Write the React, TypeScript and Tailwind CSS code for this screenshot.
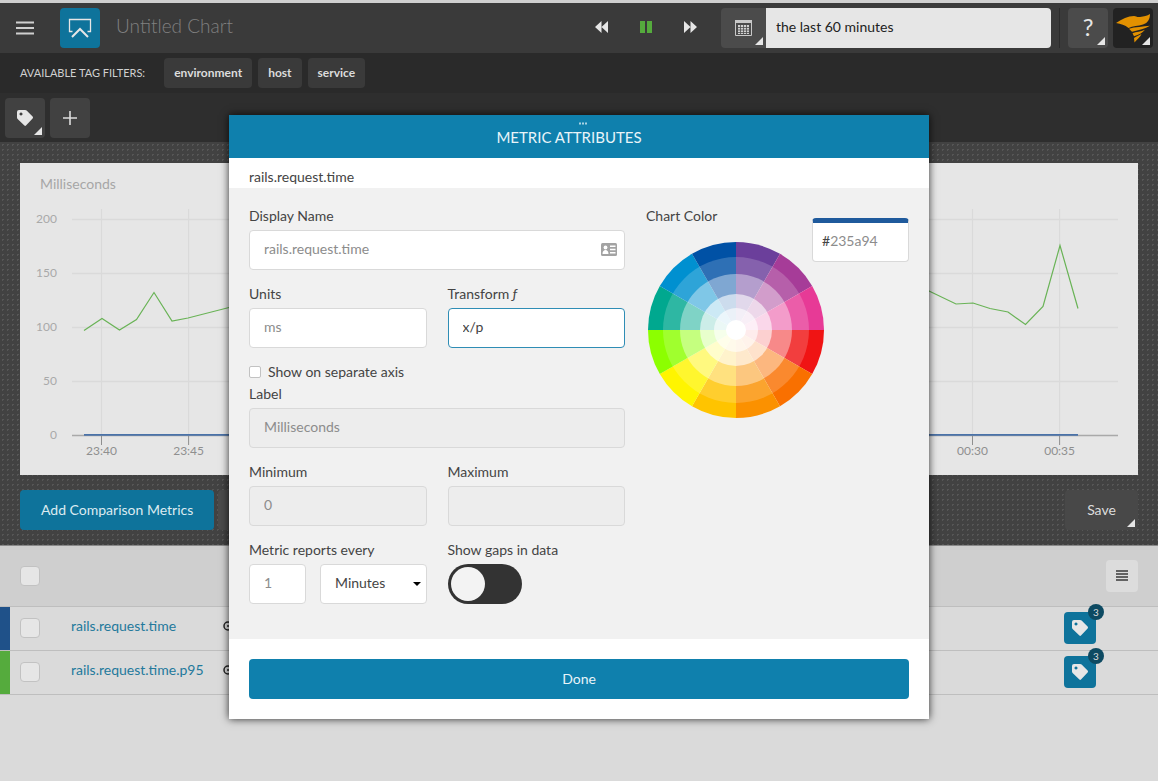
import type { ReactNode } from "react";

const filters = ["environment", "host", "service"];

const metrics = [
  { name: "rails.request.time", stripe: "bg-[#1f5189]", tags: 3 },
  { name: "rails.request.time.p95", stripe: "bg-[#55ab3d]", tags: 3 },
];

const yTicks = [200, 150, 100, 50, 0];
const xTicks = ["23:40", "23:45", "23:50", "23:55", "00:00", "00:05", "00:10", "00:15", "00:20", "00:25", "00:30", "00:35"];

// clockwise from twelve o'clock
const wheelColors = [
  "#6b3f9b", "#a63c98", "#e73a96", "#f01414", "#f97000", "#fb9100",
  "#ffc400", "#fff500", "#8cff00", "#00a88f", "#0090d0", "#0051a5",
];

const wheelTints = [
  { r: 73, opacity: 0.18 },
  { r: 56, opacity: 0.39 },
  { r: 36, opacity: 0.6 },
  { r: 22, opacity: 0.6 },
  { r: 10, opacity: 1 },
];

function Corner() {
  return (
    <svg className="absolute right-[3px] bottom-[3px] size-2" viewBox="0 0 8 8" aria-hidden="true">
      <path d="M8 0v8H0z" fill="#e6e6e6" />
    </svg>
  );
}

function TagIcon() {
  return (
    <svg width="16" height="16" viewBox="0 0 16 16" fill="#e6e6e6" aria-hidden="true">
      <path
        fillRule="evenodd"
        d="M2 0h6.200q.8 0 1.400.6l6 6q.8.9 0 1.800l-6.600 7.100q-.8.8-1.600 0L.6 8.900Q0 8.300 0 7.500V2Q0 0 2 0zM4 2.500a1.500 1.500 0 1 0 .01 0z"
      />
    </svg>
  );
}

function Header() {
  return (
    <header className="flex h-[53px] items-center border-t-3 border-[#cfcfcf] bg-[#3a3a3a] pr-[5px] pb-px pl-4">
      <button aria-label="Menu">
        <svg width="18" height="14" viewBox="0 0 18 14" stroke="#cfcfcf" strokeWidth="1.800">
          <path d="M0 1.500h18M0 7h18M0 12.500h18" />
        </svg>
      </button>
      <a href="#charts" aria-label="Charts" className="ml-[26px] flex size-10 items-center justify-center rounded bg-[#0e739b]">
        <svg width="24" height="20" viewBox="0 0 24 20" fill="none" stroke="#e6e6e6">
          <path d="M4.500 13.500H1.500V1.500H22.500V13.500H19.500" strokeWidth="1.300" />
          <path d="M4 19l8-8 8 8" strokeWidth="2" />
        </svg>
      </a>
      <h1 className="ml-4 pb-1 text-[19px] leading-6 font-light text-[#808080]">Untitled Chart</h1>

      <div className="ml-auto flex items-center gap-8 pb-px">
        <button aria-label="Back">
          <svg width="13" height="12" viewBox="0 0 13 12" fill="#e6e6e6">
            <path d="M6.500 0v12L0 6zM13 0v12L6.500 6z" />
          </svg>
        </button>
        <button aria-label="Pause">
          <svg width="12" height="12" viewBox="0 0 12 12" fill="#55ab3d">
            <path d="M0 0h5v12H0zM7 0h5v12H7z" />
          </svg>
        </button>
        <button aria-label="Forward">
          <svg width="13" height="12" viewBox="0 0 13 12" fill="#e6e6e6">
            <path d="M0 0l6.500 6L0 12zM6.500 0L13 6l-6.500 6z" />
          </svg>
        </button>
      </div>

      <div className="ml-6 flex h-10 w-[330px]">
        <button aria-label="Pick a date" className="relative flex w-[45px] items-center justify-center rounded-l bg-[#4b4b4b]">
          <svg width="17" height="16" viewBox="0 0 17 16">
            <path d="M0.500 0.500h16v15H0.500z" fill="none" stroke="#c8c8c8" />
            <path d="M0 0h17v3H0z" fill="#c8c8c8" />
            <path d="M3 5h11v9H3z" fill="#d0d0d0" />
            <path d="M3 7.500h11M3 10h11M3 12.500h11M5.500 5v9M8.500 5v9M11.500 5v9" stroke="#4b4b4b" strokeWidth="0.800" />
          </svg>
          <Corner />
        </button>
        <input
          aria-label="Time range"
          defaultValue="the last 60 minutes"
          className="min-w-0 flex-1 rounded-r bg-[#e6e6e6] px-[10px] pb-[2px] text-sm text-[#222]"
        />
      </div>

      <div className="ml-2 h-10 w-px bg-[#2b2b2b]" />
      <button aria-label="Help" className="relative ml-2 flex size-10 items-center justify-center rounded bg-[#4b4b4b] pb-[2px] text-2xl text-[#e6e6e6]">
        ?
        <Corner />
      </button>
      <button aria-label="Account" className="relative ml-[5px] size-10 rounded bg-[#222]">
        <svg width="40" height="40" viewBox="0 0 40 40" fill="#e39100">
          <path d="M3 15C9 11 15 8 21 8c2 0 3 1.500 6 1 4-.5 7-1 10-3 0 5-2 9-7 10.500C25 18 20 18 15.500 20 12 17 8 16 3 15z" />
          <path d="M16 20.800c6-2 14-2 21-3-5 3-11 4-18 6-1-1-2-2-3-3z" />
          <path d="M19.500 25.300c4-1.500 8-1.500 12.500-3.500-3 3.500-6 5-11 6.500z" />
          <path d="M21 30c2-1.500 5-2.500 7.500-4-1 3-4 5-7 8.500z" />
        </svg>
        <Corner />
      </button>
    </header>
  );
}

function FilterBars() {
  return (
    <>
      <div className="flex h-10 items-center gap-[6px] bg-[#2a2a2a] pl-5">
        <span className="mr-[13px] text-[11px] text-[#d0d0d0]">AVAILABLE TAG FILTERS:</span>
        {filters.map((name) => (
          <button key={name} className="h-[30px] rounded bg-[#3a3a3a] px-[10px] text-[12px] font-bold text-[#dcdcdc]">
            {name}
          </button>
        ))}
      </div>
      <div className="flex h-[49px] items-center gap-[5px] bg-[#2e2e2e] pl-[5px]">
        <button aria-label="Tags" className="relative flex size-10 items-center justify-center rounded bg-[#414141]">
          <TagIcon />
          <Corner />
        </button>
        <button aria-label="Add" className="flex size-10 items-center justify-center rounded bg-[#414141]">
          <svg width="14" height="14" viewBox="0 0 14 14" stroke="#dcdcdc" strokeWidth="1.600">
            <path d="M7 0v14M0 7h14" />
          </svg>
        </button>
      </div>
    </>
  );
}

function Chart() {
  return (
    <svg viewBox="0 0 1118 312" className="block h-auto w-full bg-[#e6e6e6]" role="img" aria-label="Milliseconds over time">
      <text x="20" y="26" fontSize="14" fill="#a6a6a6">Milliseconds</text>
      {yTicks.map((tick, i) => (
        <g key={tick}>
          <path d={`M52 ${56.500 + i * 54}H1098`} stroke={tick === 0 ? "#a9a9a9" : "#dadada"} strokeWidth="1.500" />
          <text x="37" y={60 + i * 54} fontSize="12" textAnchor="end" fill="#a9a9a9">{tick}</text>
        </g>
      ))}
      {xTicks.map((tick, i) => (
        <g key={tick}>
          <path d={`M${81.500 + i * 87.100} 46V272`} stroke="#dadada" strokeWidth="1.200" />
          <path d={`M${81.500 + i * 87.100} 273v9`} stroke="#8f8f8f" />
          <text x={81.500 + i * 87.100} y="292" fontSize="12" textAnchor="middle" fill="#8f8f8f">{tick}</text>
        </g>
      ))}
      <path d="M64 271.800H1058" stroke="#4a72a8" strokeWidth="1.800" />
      <polyline
        points="64,167.500 82,155.500 99.500,167 116.500,156.500 134,129.500 152,158 168,155 209,144.500 300,138 420,150 540,132 660,146 780,138 900,124 909,128 936,141 953,140 970,145.500 988,149 1005.500,161.500 1023,143.500 1040,82.500 1058,145.500"
        fill="none"
        stroke="#69b356"
        strokeWidth="1.200"
      />
    </svg>
  );
}

function MetricsTable() {
  return (
    <table className="w-full border-collapse text-sm">
      <thead>
        <tr className="h-[60px] border-b border-[#bebebe] bg-[#cfcfcf]">
          <th className="w-[10px]"></th>
          <th className="w-[61px] pl-[10px] text-left">
            <Tick label="Select all metrics" />
          </th>
          <th></th>
          <th></th>
          <th className="w-[94px]">
            <button aria-label="List options" className="ml-[42px] flex size-8 items-center justify-center rounded bg-[#dcdcdc]">
              <svg width="12" height="11" viewBox="0 0 12 11" stroke="#3a3a3a" strokeWidth="1.500">
                <path d="M0 1h12M0 4h12M0 7h12M0 10h12" />
              </svg>
            </button>
          </th>
        </tr>
      </thead>
      <tbody>
        {metrics.map((metric) => (
          <tr key={metric.name} className="h-11 border-b border-[#bebebe]">
            <td className={metric.stripe}></td>
            <td className="pl-[10px]">
              <Tick label={`Select ${metric.name}`} />
            </td>
            <td className="w-[152px] pb-1">
              <a href="#metric" className="text-[#23799c]">{metric.name}</a>
            </td>
            <td className="pb-1">
              <svg width="10" height="10" viewBox="0 0 10 10" fill="none" stroke="#222" strokeWidth="1.500">
                <circle cx="5" cy="5" r="4" />
                <path d="M4 5h3" />
              </svg>
            </td>
            <td>
              <button aria-label={`Tags of ${metric.name}`} className="relative flex size-8 items-center justify-center rounded-sm bg-[#0e739b]">
                <TagIcon />
                <span className="absolute -top-2 -right-2 size-4 rounded-full bg-[#0d4a62] text-center text-[10px] leading-4 text-[#dcdcdc]">
                  {metric.tags}
                </span>
              </button>
            </td>
          </tr>
        ))}
      </tbody>
    </table>
  );
}

function Tick({ label }: { label: string }) {
  return (
    <input
      type="checkbox"
      aria-label={label}
      className="block size-5 appearance-none rounded-sm border border-[#c2c2c2] bg-[#e6e6e6]"
    />
  );
}

function Field({ id, label, children }: { id: string; label: ReactNode; children: ReactNode }) {
  return (
    <div>
      <label htmlFor={id} className="mb-1 block leading-5">{label}</label>
      {children}
    </div>
  );
}

const inputClass =
  "block h-10 w-full rounded border border-[#d9d9d9] bg-white px-[14px] pb-1 text-[#8c8c8c] outline-none disabled:bg-[#ededed]";

function ColorWheel() {
  const point = (deg: number) => {
    const a = (deg * Math.PI) / 180;
    return `${88 + 88 * Math.sin(a)} ${88 - 88 * Math.cos(a)}`;
  };
  return (
    <svg width="176" height="176" viewBox="0 0 176 176" role="img" aria-label="Color wheel">
      {wheelColors.map((color, i) => (
        <path key={color} d={`M88 88L${point(i * 30)}A88 88 0 0 1 ${point(i * 30 + 30)}Z`} fill={color} />
      ))}
      {wheelTints.map((tint) => (
        <circle key={tint.r} cx="88" cy="88" r={tint.r} fill="white" fillOpacity={tint.opacity} />
      ))}
    </svg>
  );
}

function MetricDialog() {
  return (
    <div
      role="dialog"
      aria-labelledby="dialog-title"
      className="absolute top-[115px] left-1/2 w-[700px] -translate-x-1/2 bg-white text-sm text-[#444] shadow-[0_0_8px_rgba(0,0,0,0.8)]"
    >
      <div className="flex h-[43px] flex-col items-center bg-[#0f80ad] pt-[7px] text-[#e8f4f9]">
        <svg width="8" height="3" viewBox="0 0 8 3" fill="#a9d3e4" className="ml-2">
          <path d="M0 0.500h2v2H0zM3 0.500h2v2H3zM6 0.500h2v2H6z" />
        </svg>
        <h2 id="dialog-title" className="mr-5 mt-[2px] text-[15px] leading-5">METRIC ATTRIBUTES</h2>
      </div>
      <p className="h-[30px] px-5 pt-[9px] leading-5">rails.request.time</p>

      <div className="flex gap-[21px] bg-[#f1f1f1] px-5 pt-[18px] pb-[35px]">
        <div className="w-[376px] space-y-[14px]">
          <Field id="display-name" label="Display Name">
            <div className="relative">
              <input id="display-name" defaultValue="rails.request.time" className={inputClass} />
              <svg className="absolute top-[13px] right-2 h-[13px] w-4" viewBox="0 0 16 13" aria-hidden="true">
                <rect width="16" height="13" rx="1.500" fill="#a3a3a3" />
                <circle cx="4.500" cy="4.500" r="1.900" fill="white" />
                <path d="M1.500 11c0-3 1.500-4 3-4s3 1 3 4zM9 2.500h5.500V4H9zM9 5.700h5.500v1.500H9zM9 9h5.500v1.500H9z" fill="white" />
              </svg>
            </div>
          </Field>
          <div className="grid grid-cols-2 gap-[21px]">
            <Field id="units" label="Units">
              <input id="units" defaultValue="ms" className={inputClass} />
            </Field>
            <Field id="transform" label={<>Transform <i>ƒ</i></>}>
              <input
                id="transform"
                defaultValue="x/p"
                className="block h-10 w-full rounded border border-[#2f8db5] bg-white px-[14px] pb-1 text-[#444] outline-none"
              />
            </Field>
          </div>
          <div>
            <div className="mb-[2px] flex items-center gap-[7px]">
              <input id="separate-axis" type="checkbox" className="size-3 appearance-none rounded-xs border border-[#c2c2c2] bg-white" />
              <label htmlFor="separate-axis" className="leading-5">Show on separate axis</label>
            </div>
            <Field id="axis-label" label="Label">
              <input id="axis-label" disabled defaultValue="Milliseconds" className={inputClass} />
            </Field>
          </div>
          <div className="grid grid-cols-2 gap-[21px]">
            <Field id="minimum" label="Minimum">
              <input id="minimum" disabled defaultValue="0" className={inputClass} />
            </Field>
            <Field id="maximum" label="Maximum">
              <input id="maximum" disabled className={inputClass} />
            </Field>
          </div>
          <div className="grid grid-cols-2 gap-[21px]">
            <Field id="period" label="Metric reports every">
              <div className="flex gap-[14px]">
                <div className="w-[57px]">
                  <input id="period" defaultValue="1" className={inputClass} />
                </div>
                <div className="relative flex-1">
                  <select aria-label="Period unit" className="h-10 w-full appearance-none rounded border border-[#d9d9d9] bg-white px-[14px] pb-[2px] text-[#444]">
                    <option>Minutes</option>
                  </select>
                  <svg className="pointer-events-none absolute top-[18px] right-[6px] h-1 w-2" viewBox="0 0 8 4">
                    <path d="M0 0h8L4 4z" />
                  </svg>
                </div>
              </div>
            </Field>
            <Field id="gaps" label="Show gaps in data">
              <div className="relative h-10 w-[74px]">
                <input id="gaps" type="checkbox" role="switch" className="block h-10 w-[74px] appearance-none rounded-full bg-[#333]" />
                <span className="pointer-events-none absolute top-[3px] left-[3px] size-[34px] rounded-full bg-[#f3f3f3]" />
              </div>
            </Field>
          </div>
        </div>

        <div className="flex flex-1 items-start justify-between">
          <div>
            <label htmlFor="hex" className="block leading-5">Chart Color</label>
            <div className="mt-4 ml-[2px]">
              <ColorWheel />
            </div>
          </div>
          <div className="-ml-3 mt-3 flex h-11 w-[97px] shrink-0 items-center rounded border border-t-5 border-[#d9d9d9] border-t-[#1f5a9c] bg-white pb-[2px] pl-[9px]">
            <span>#</span>
            <input id="hex" defaultValue="235a94" className="w-16 min-w-0 text-[#8c8c8c] outline-none" />
          </div>
        </div>
      </div>

      <div className="p-5">
        <button className="h-10 w-full rounded-sm bg-[#0f80ad] text-[#e8f4f9]">Done</button>
      </div>
    </div>
  );
}

export default function App() {
  return (
    <div className="relative min-h-screen bg-[#dadada] font-['Lato',sans-serif]">
      <Header />
      <FilterBars />
      {/* Chart area */}
      <main className="border-b border-[#8a8a8a] bg-[#424242] bg-[radial-gradient(#565656_1px,transparent_1px)] bg-size-[5px_5px] px-5 pt-[21px] pb-[15px]">
        <Chart />
        <div className="mt-[15px] flex">
          <button className="h-10 rounded bg-[#0e739b] px-[21px] text-sm text-[#dcebf1]">Add Comparison Metrics</button>
          <button aria-label="More" className="ml-1 h-10 w-16 rounded bg-[#4b4b4b]" />
          <button className="relative ml-auto h-10 w-[73px] rounded bg-[#484848] text-sm text-[#dcdcdc]">
            Save
            <Corner />
          </button>
        </div>
      </main>
      <MetricsTable />
      <MetricDialog />
    </div>
  );
}
